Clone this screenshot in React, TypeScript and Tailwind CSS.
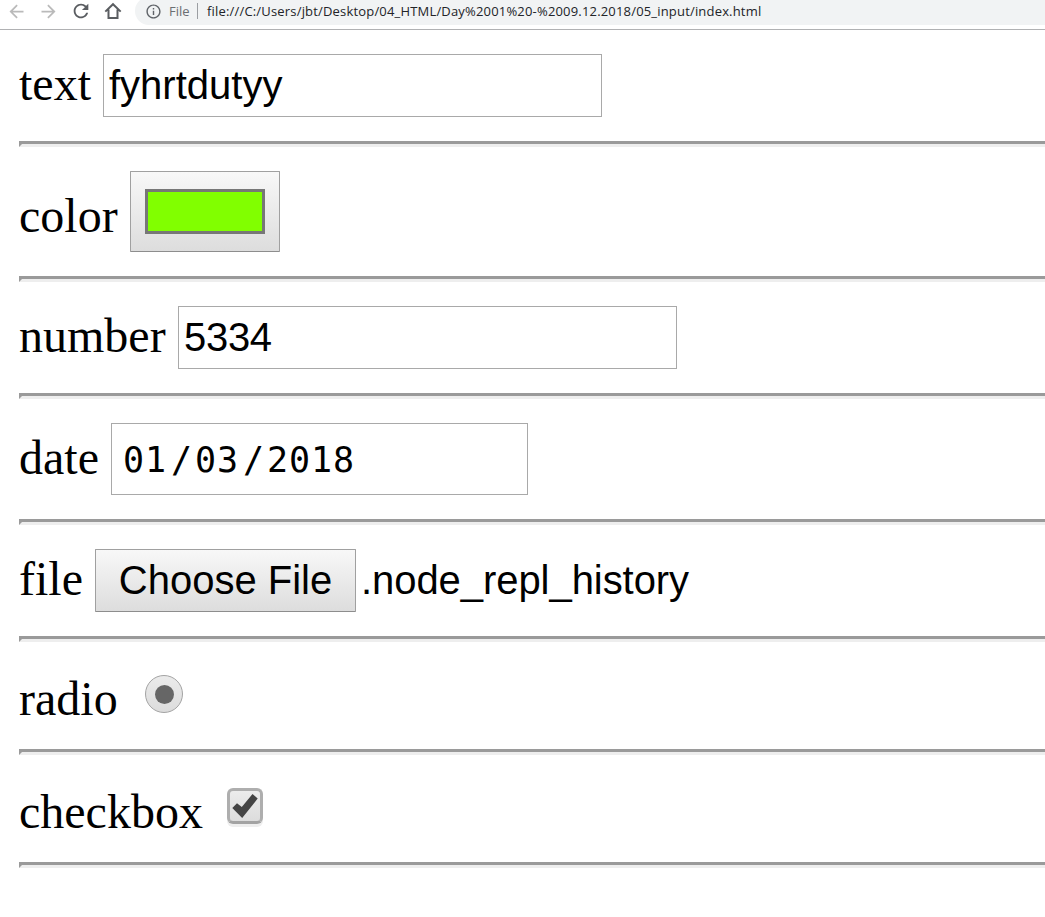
import type { ReactNode } from "react";
import { MdArrowBack, MdArrowForward, MdRefresh, MdInfoOutline } from "react-icons/md";

function Row({ label, height, offset, children }: { label: string; height: string; offset: string; children: ReactNode }) {
  return (
    <div className={`${height} pt-[24px]`}>
      <div className="flex items-start">
        <span className={`${offset} shrink-0 font-['Liberation_Serif',serif] text-[48px] leading-none`}>{label}</span>
        {children}
      </div>
    </div>
  );
}

function Rule() {
  return <div className="h-[6px] w-[1100px] border-[3px] border-[#9a9a9a] border-r-[#eeeeee] border-b-[#eeeeee]" />;
}

const field = "box-border shrink-0 border border-[#a9a9a9] bg-white font-['Liberation_Sans',sans-serif] text-[40px] text-black";

export default function App() {
  return (
    <div className="h-[917px] w-[1045px] overflow-hidden bg-white text-black">
      <div className="flex h-[30px] items-start border-b border-[#b0b1b3]">
        <div className="flex h-[22px] items-center pl-[6px] text-[#bababa]">
          <MdArrowBack size={21} />
          <MdArrowForward size={21} className="ml-[11px]" />
          <MdRefresh size={22} className="ml-[11px] text-[#5a5d61]" />
          <svg className="ml-[12px] text-[#5a5d61]" width="18" height="18" viewBox="0 0 18 18" fill="none" stroke="currentColor" strokeWidth="2">
            <path d="M1.3 9.6 9 2.2l7.700 7.400M4.500 7.500v8.500h9V7.500" />
          </svg>
        </div>
        <div className="-mt-[3px] ml-[13px] flex h-[28px] flex-1 items-center rounded-l-full bg-[#f1f3f4] pl-[10px] font-['Open_Sans',sans-serif] text-[13px] whitespace-nowrap">
          <MdInfoOutline size={17} className="shrink-0 text-[#5f6368]" />
          <span className="mt-px ml-[7px] w-[22px] text-[#6b6e72]">File</span>
          <span className="ml-[6px] h-[16px] w-px bg-[#9b9ea2]" />
          <span className="mt-px ml-[9px] tracking-[0.18px] text-[#222428]">file:///C:/Users/jbt/Desktop/04_HTML/Day%2001%20-%2009.12.2018/05_input/index.html</span>
        </div>
      </div>
      <div className="pl-[19px]">
        <Row label="text" height="h-[111px]" offset="mt-[6px] w-[84px]">
          <div className={`${field} h-[63px] w-[499px] pl-[5px] leading-[61px]`}>fyhrtdutyy</div>
        </Row>
        <Rule />
        <Row label="color" height="h-[129px]" offset="mt-[21px] w-[111px]">
          <div className="box-border flex h-[81px] w-[150px] items-center justify-center rounded-[1px] border border-[#a0a0a0] border-b-[#8d8d8d] bg-linear-to-b from-[#f8f8f8] to-[#dddddd]">
            <div className="h-[45px] w-[120px] border-[3px] border-[#777777] bg-[#81ff00]" />
          </div>
        </Row>
        <Rule />
        <Row label="number" height="h-[111px]" offset="mt-[6px] w-[159px]">
          <div className={`${field} h-[63px] w-[499px] pl-[5px] leading-[61px] tracking-[-0.3px]`}>5334</div>
        </Row>
        <Rule />
        <Row label="date" height="h-[120px]" offset="mt-[11px] w-[92px]">
          <div className="box-border flex h-[72px] w-[417px] border border-[#a9a9a9] pl-[11px] font-['DejaVu_Sans_Mono',monospace] text-[35px] leading-[73px] tracking-[0.93px]">
            <span>01</span>
            <span className="mr-[2px] ml-[4px]">/</span>
            <span>03</span>
            <span className="mr-[2px] ml-[4px]">/</span>
            <span>2018</span>
          </div>
        </Row>
        <Rule />
        <Row label="file" height="h-[111px]" offset="mt-[6px] w-[76px]">
          <div className="box-border h-[63px] w-[261px] rounded-[1px] border border-[#a0a0a0] border-b-[#8d8d8d] bg-linear-to-b from-[#f8f8f8] to-[#dddddd] text-center font-['Liberation_Sans',sans-serif] text-[40px] leading-[61px]">
            Choose File
          </div>
          <span className="ml-[5px] font-['Liberation_Sans',sans-serif] text-[40px] leading-[63px] tracking-[-0.06px]">.node_repl_history</span>
        </Row>
        <Rule />
        <Row label="radio" height="h-[107px]" offset="mt-[9px] w-[126px]">
          <div className="mt-[9px] flex h-[38px] w-[38px] items-center justify-center rounded-full border border-[#a3a3a3] bg-linear-to-b from-[#ebebeb] to-[#dcdcdc]">
            <div className="h-[19px] w-[19px] rounded-full bg-[#666666]" />
          </div>
        </Row>
        <Rule />
        <Row label="checkbox" height="h-[107px]" offset="mt-[9px] w-[208px]">
          <div className="mt-[9px] h-[36px] w-[36px] rounded-[6px] border-[3px] border-[#aeaeae] border-b-[#a3a3a3] bg-linear-to-b from-[#ececec] to-[#dcdcdc] shadow-[0_3px_0_#eeeeee]">
            <svg width="30" height="30" viewBox="0 0 30 30" fill="#444444">
              <path d="M2.300 17 7 12.300l4.800 3.800L22.500 3l5.200 4.500L12.200 27Z" />
            </svg>
          </div>
        </Row>
        <Rule />
      </div>
    </div>
  );
}
